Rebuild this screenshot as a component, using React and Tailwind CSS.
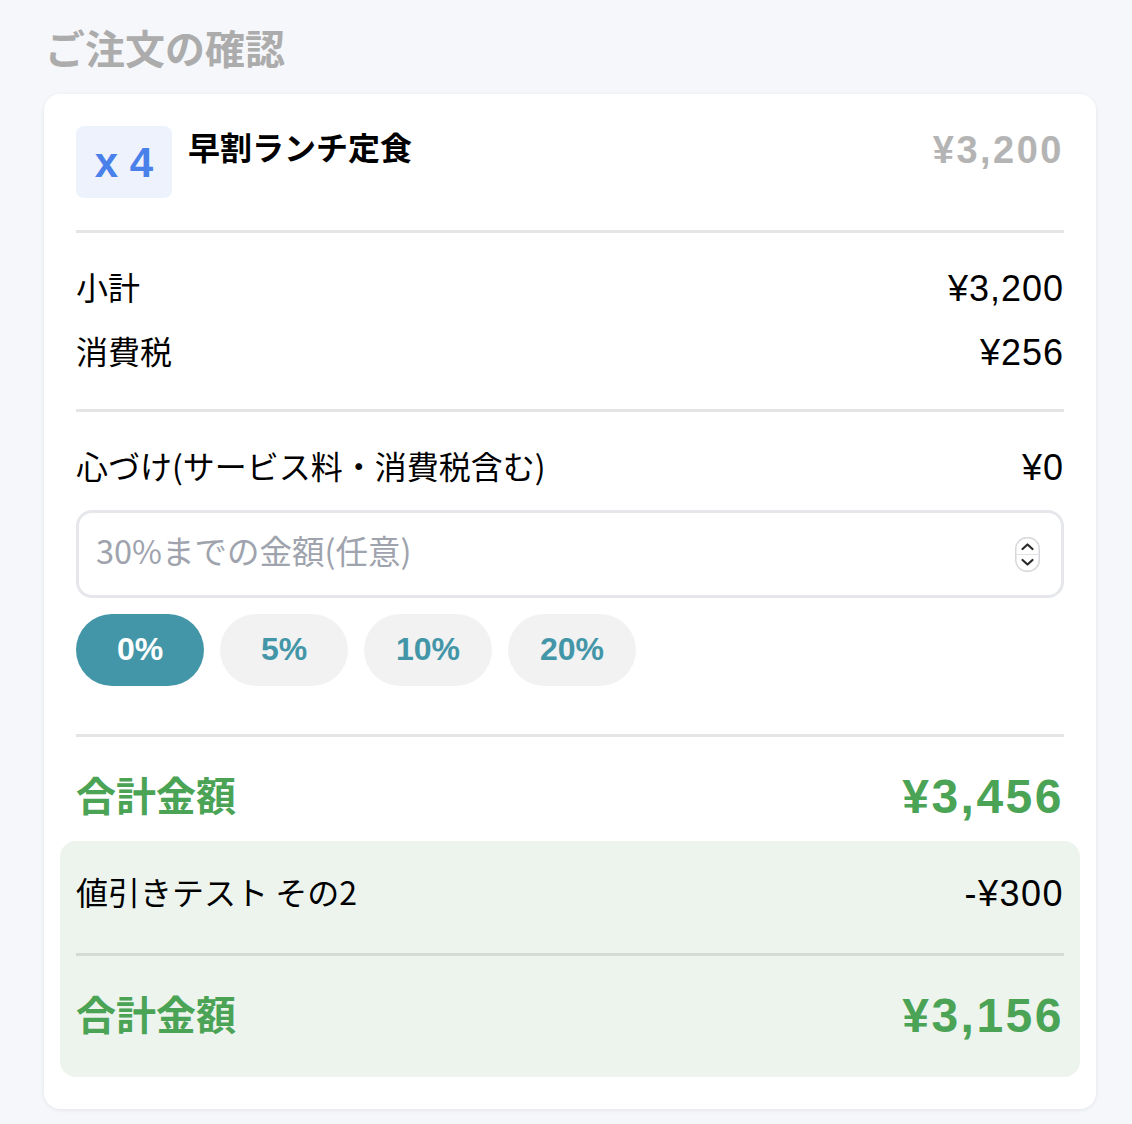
import React from "react";

const jp = { fontFamily: '"Noto Sans CJK JP", "Liberation Sans", sans-serif' };
const num = { fontFamily: '"Liberation Sans", "Noto Sans CJK JP", sans-serif' };

function Spinner() {
  return (
    <svg width="25" height="35" viewBox="0 0 25 35" className="shrink-0">
      <rect x="0.75" y="0.75" width="23.5" height="33.5" rx="11" fill="#fff" stroke="#d8d8dc" strokeWidth="1.5" />
      <line x1="1" y1="17.5" x2="24" y2="17.5" stroke="#e2e2e5" strokeWidth="1" />
      <path d="M7.5 12 L12.5 7.5 L17.5 12" fill="none" stroke="#2a2a2a" strokeWidth="2.2" strokeLinecap="round" strokeLinejoin="round" />
      <path d="M7.5 23 L12.5 27.5 L17.5 23" fill="none" stroke="#2a2a2a" strokeWidth="2.2" strokeLinecap="round" strokeLinejoin="round" />
    </svg>
  );
}

export default function App() {
  const tips = ["0%", "5%", "10%", "20%"];
  return (
    <div className="min-h-[1124px] w-[1132px] bg-[#f6f7fb] pl-[44px] pt-[21px]" style={jp}>
      <h1 className="h-[56px] pb-[4px] text-[40px] font-bold leading-[52px] text-[#acacac] pl-[1px]">ご注文の確認</h1>
      <div className="mt-[17px] w-[1052px] rounded-2xl bg-white p-8 shadow-[0_1px_4px_rgba(0,0,0,0.08)]">
        {/* header */}
        <div className="flex items-start">
          <div className="flex h-[72px] w-[96px] items-center justify-center rounded-lg bg-[#edf2fd] text-[42px] font-bold text-[#4a80ea]" style={num}>
            x 4
          </div>
          <div className="ml-4 flex-1 text-[32px] font-bold leading-[40px] text-black">早割ランチ定食</div>
          <div className="pt-[2px] text-[38px] font-bold leading-[44px] tracking-[2.5px] text-[#b4b4b4]" style={num}>¥3,200</div>
        </div>
        <div className="mt-8 h-[3px] bg-[#e5e5e5]" />

        {/* subtotal */}
        <div className="py-6">
          <div className="flex h-16 items-center justify-between text-black">
            <span className="pb-[7px] text-[32px]">小計</span>
            <span className="text-[36px] tracking-[1px]" style={num}>¥3,200</span>
          </div>
          <div className="flex h-16 items-center justify-between text-black">
            <span className="pb-[7px] text-[32px]">消費税</span>
            <span className="text-[36px] tracking-[1px]" style={num}>¥256</span>
          </div>
        </div>
        <div className="h-[3px] bg-[#e5e5e5]" />

        {/* tip */}
        <div className="pt-6 pb-12">
          <div className="flex h-16 items-center justify-between text-black">
            <span className="pb-[7px] text-[32px]">心づけ(サービス料・消費税含む)</span>
            <span className="text-[36px] tracking-[1px]" style={num}>¥0</span>
          </div>
          <div className="mt-[10px] flex h-[88px] items-center rounded-2xl border-[3px] border-[#e5e7eb] pl-[17px] pr-[21px]">
            <input
              className="min-w-0 flex-1 bg-transparent pb-[8px] text-[32.5px] text-black outline-none placeholder:text-[#9ea3ad]"
              placeholder="30%までの金額(任意)"
              style={jp}
            />
            <Spinner />
          </div>
          <div className="mt-4 flex gap-4">
            {tips.map((t, i) => (
              <button
                key={t}
                className={
                  i === 0
                    ? "flex h-[72px] w-[128px] items-center justify-center rounded-full bg-[#4396a8] pb-[3px] text-[32px] font-bold text-white"
                    : "flex h-[72px] w-[128px] items-center justify-center rounded-full bg-[#f2f2f2] pb-[3px] text-[32px] font-bold text-[#4396a8]"
                }
                style={num}
              >
                {t}
              </button>
            ))}
          </div>
        </div>
        <div className="h-[3px] bg-[#e5e5e5]" />

        {/* total */}
        <div className="mt-8 flex h-[56px] items-center justify-between text-[#4ba356]">
          <span className="pb-[6px] text-[40px] font-bold">合計金額</span>
          <span className="text-[48px] font-bold tracking-[2.5px]" style={num}>¥3,456</span>
        </div>

        <div className="-mx-4 mt-4 rounded-2xl bg-[#edf4ee] px-4 py-4">
          <div className="flex h-[74px] items-center justify-between text-black">
            <span className="pb-[7px] text-[32px]">値引きテスト その2</span>
            <span className="text-[36px] tracking-[1.5px]" style={num}>-¥300</span>
          </div>
          <div className="mt-[22px] h-[3px] bg-[#d4dbd5]" />
          <div className="mb-[17px] mt-8 flex h-[56px] items-center justify-between text-[#4ba356]">
            <span className="pb-[6px] text-[40px] font-bold">合計金額</span>
            <span className="text-[48px] font-bold tracking-[2.5px]" style={num}>¥3,156</span>
          </div>
        </div>
      </div>
    </div>
  );
}
